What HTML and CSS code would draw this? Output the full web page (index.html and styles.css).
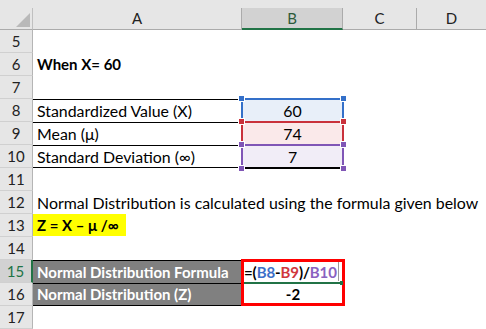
FILE: index.html
```html
<!DOCTYPE html>
<html>
<head>
<meta charset="utf-8">
<link rel="stylesheet" href="styles.css">
</head>
<body>
<div class="sheet">
  <div class="strip"></div>
  <div class="hdr corner"><svg width="33" height="22" viewBox="0 0 33 22"><polygon points="30,5 30,19 16,19" fill="#b9b9b9"/></svg></div>
  <div class="hdr col">A</div>
  <div class="hdr col sel">B</div>
  <div class="hdr col">C</div>
  <div class="hdr col last">D</div>

  <div class="rh">5</div><div class="c"></div><div class="c"></div><div class="c"></div><div class="c"></div>
  <div class="rh">6</div><div class="c b">When X= 60</div><div class="c"></div><div class="c"></div><div class="c"></div>
  <div class="rh">7</div><div class="c"></div><div class="c"></div><div class="c"></div><div class="c"></div>

  <div class="rh">8</div><div class="c bx">Standardized Value (X)</div><div class="c rng blue"><i class="h tl"></i><i class="h tr"></i>60</div><div class="c"></div><div class="c"></div>
  <div class="rh">9</div><div class="c bx">Mean (μ)</div><div class="c rng red"><i class="h tl"></i><i class="h tr"></i>74</div><div class="c"></div><div class="c"></div>
  <div class="rh">10</div><div class="c bx bxb">Standard Deviation (∞)</div><div class="c rng purple last"><i class="h tl"></i><i class="h tr"></i><i class="h bl"></i><i class="h br"></i>7</div><div class="c"></div><div class="c"></div>
  <div class="rh">11</div><div class="c"></div><div class="c"></div><div class="c"></div><div class="c"></div>
  <div class="rh">12</div><div class="c">Normal Distribution is calculated using the formula given below</div><div class="c"></div><div class="c"></div><div class="c"></div>
  <div class="rh">13</div><div class="c b"><span class="hl">Z = X – μ /∞</span></div><div class="c"></div><div class="c"></div><div class="c"></div>
  <div class="rh">14</div><div class="c"></div><div class="c"></div><div class="c"></div><div class="c"></div>
  <div class="rh sel">15</div><div class="c b dark">Normal Distribution Formula</div>
  <div class="result">
    <div class="edit">=(<span class="rb">B8</span>-<span class="rr">B9</span>)/<span class="rp">B10</span><span class="caret"></span><span class="fill"></span></div>
    <div class="val">-2</div>
  </div>
  <div class="c"></div><div class="c"></div>
  <div class="rh">16</div><div class="c b dark dark2">Normal Distribution (Z)</div><div class="c"></div><div class="c"></div>
  <div class="rh">17</div><div class="c"></div><div class="c"></div><div class="c"></div><div class="c"></div>
</div>
</body>
</html>
```

FILE: styles.css
```css
* { box-sizing: border-box; }
html, body { margin: 0; padding: 0; background: #fff; }
body { width: 486px; height: 329px; overflow: hidden; }

.sheet {
  display: grid;
  grid-template-columns: 33px 209px 101px 74px 69px;
  grid-template-rows: 8px 22px repeat(13, 23px);
  font-family: "Lato", "Open Sans", sans-serif;
  font-size: 15.9px;
  color: #000;
}

.strip { grid-column: 1 / -1; background: #e6e6e6; }

.hdr {
  background: #e6e6e6;
  border-bottom: 1px solid #ababab;
  line-height: 20px;
  text-align: center;
  color: #222;
  font-size: 15px;
}
.hdr.corner { border-right: 1px solid #c0c0c0; }
.hdr.corner svg { display: block; }
.hdr.col { border-right: 1px solid #ababab; }
.hdr.col.last { border-right: 0; }
.hdr.sel {
  background: #d2d2d2;
  border-bottom: 2px solid #217346;
  color: #2d5a3a;
}

.rh {
  background: #e6e6e6;
  border-right: 1px solid #b5b5b5;
  border-bottom: 1px solid #d0d0d0;
  text-align: center;
  line-height: 22px;
  color: #222;
  font-size: 15px;
}
.rh.sel {
  background: #d2d2d2;
  border-right: 2px solid #217346;
  color: #217346;
}

.c {
  line-height: 23px;
  padding-left: 4px;
  white-space: nowrap;
  position: relative;
}
.b { font-weight: bold; font-size: 15px; }

.bx { border-top: 1px solid #000; line-height: 22px; }
.bxb { border-bottom: 1px solid #000; line-height: 21px; }

.rng {
  margin: -1px -1px 0 -1px;
  border: 2px solid;
  border-bottom: 0;
  text-align: center;
  padding: 0;
  line-height: 22px;
}
.rng.last { border-bottom: 2px solid; margin-bottom: -1px; line-height: 21px; }
.blue { border-color: #3470c9; background: #e8eff9; }
.red { border-color: #c9313b; background: #fae9ea; }
.purple { border-color: #8056b6; background: #f1edf7; }

.h {
  position: absolute;
  width: 7px;
  height: 7px;
  border: 1px solid #fff;
  z-index: 2;
}
.blue .h { background: #3470c9; }
.red .h { background: #c9313b; }
.purple .h { background: #8056b6; }
.h.tl { top: -5px; left: -5px; }
.h.tr { top: -5px; right: -5px; }
.h.bl { bottom: -5px; left: -5px; }
.h.br { bottom: -5px; right: -5px; }

.hl {
  display: inline-block;
  background: #ffff00;
  margin-left: -4px;
  padding: 0 7px 0 4px;
  line-height: 22px;
}

.dark {
  background: #808080;
  color: #fff;
  border-top: 1px solid #000;
  line-height: 22px;
}
.dark2 { border-bottom: 1px solid #000; line-height: 21px; }

.result {
  grid-row: span 2;
  margin: -1px -2px 0 -1px;
  border: 3px solid #ff0000;
  display: flex;
  flex-direction: column;
  font-weight: bold;
  font-size: 15px;
  position: relative;
  z-index: 3;
}
.edit {
  height: 23px;
  line-height: 20px;
  padding-left: 0;
  border-bottom: 2px solid #217346;
  margin-right: 2px;
  position: relative;
  white-space: nowrap;
  letter-spacing: -0.1px;
}
.caret {
  position: absolute;
  left: 94px;
  top: 0;
  width: 1px;
  height: 19px;
  background: #9a9a9a;
}
.fill {
  position: absolute;
  right: -3px;
  bottom: -3px;
  width: 3px;
  height: 4px;
  background: #217346;
}
.rb { color: #3c70c8; }
.rr { color: #d0373c; }
.rp { color: #8a62c0; }
.val {
  flex: 1;
  text-align: center;
  line-height: 20px;
}
```
